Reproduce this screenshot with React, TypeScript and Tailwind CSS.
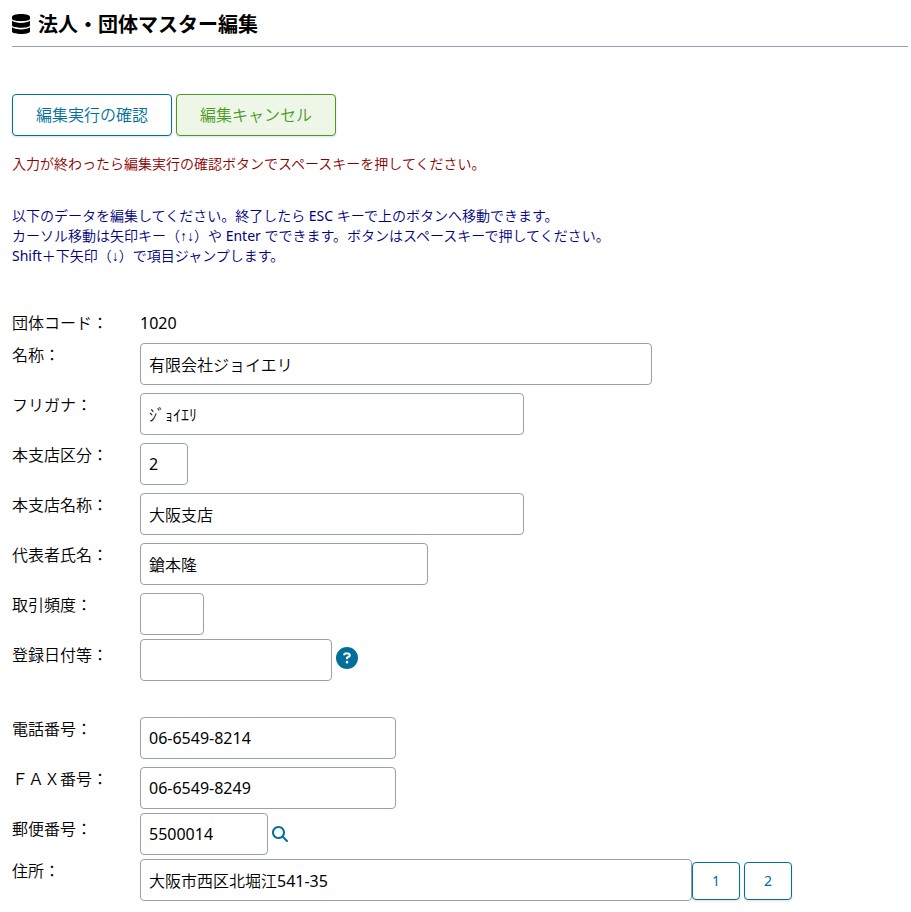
import { useState } from 'react';
import { FaCircleQuestion, FaMagnifyingGlass } from 'react-icons/fa6';

interface Field {
  id: string;
  label: string;
  value: string;
  width: string;
}

const basicFields: Field[] = [
  { id: 'name', label: '名称：', value: '有限会社ジョイエリ', width: 'w-[512px]' },
  { id: 'kana', label: 'フリガナ：', value: 'ｼﾞｮｲｴﾘ', width: 'w-96' },
  { id: 'branch_type', label: '本支店区分：', value: '2', width: 'w-12' },
  { id: 'branch_name', label: '本支店名称：', value: '大阪支店', width: 'w-96' },
  { id: 'representative', label: '代表者氏名：', value: '鎗本隆', width: 'w-72' },
  { id: 'frequency', label: '取引頻度：', value: '', width: 'w-16' },
];

const phoneFields: Field[] = [
  { id: 'tel', label: '電話番号：', value: '06-6549-8214', width: 'w-64' },
  { id: 'fax', label: 'ＦＡＸ番号：', value: '06-6549-8249', width: 'w-64' },
];

const inputClass =
  'h-[42px] min-w-0 px-2 bg-white border border-gray-400 rounded text-base text-black focus:outline-none focus:ring-2 focus:ring-sky-500';

function DatabaseIcon() {
  return (
    <svg className="w-[18px] h-5 mb-0.5 shrink-0" viewBox="0 0 18 20" fill="currentColor" aria-hidden="true">
      <path d="M0 3C0 1.2 4 0 9 0s9 1.2 9 3v1.8C18 6.3 14 7.2 9 7.2S0 6.3 0 4.8z" />
      <path d="M0 6.8C2 8.2 5.3 8.9 9 8.9s7-.7 9-2.1v4.4c0 1.6-4 2.5-9 2.5s-9-.9-9-2.5z" />
      <path d="M0 13.3c2 1.4 5.3 2.1 9 2.1s7-.7 9-2.1v3.9c0 1.8-4 2.8-9 2.8s-9-1-9-2.8z" />
    </svg>
  );
}

function TextRow({ field }: { field: Field }) {
  const [value, setValue] = useState(field.value);

  return (
    <div className="flex items-start py-1">
      <label htmlFor={field.id} className="w-32 shrink-0">
        {field.label}
      </label>
      <input
        id={field.id}
        type="text"
        value={value}
        onChange={(e) => setValue(e.target.value)}
        className={`${inputClass} ${field.width}`}
      />
    </div>
  );
}

// Narrow arrow glyphs for the key hints
function Arrow({ children }: { children: string }) {
  return <span className="font-['Liberation_Sans',sans-serif]">{children}</span>;
}

export default function App() {
  const [date, setDate] = useState('');
  const [zip, setZip] = useState('5500014');
  const [address, setAddress] = useState('大阪市西区北堀江541-35');

  return (
    <main className="pt-3 pb-2 pl-3 pr-[3px] bg-white text-base text-black font-['Noto_Sans','Noto_Sans_CJK_JP_DemiLight','Noto_Sans_CJK_JP',sans-serif]">
      <h1 className="flex items-center gap-2 pb-2 border-b border-slate-400 text-xl leading-[26px] font-bold font-['Noto_Sans','Noto_Sans_CJK_JP',sans-serif]">
        <DatabaseIcon />
        法人・団体マスター編集
      </h1>

      <div className="flex gap-1 mt-[47px]">
        <button
          type="button"
          className="w-40 h-[42px] bg-white border border-[#00709b] rounded shadow-sm text-[#00709b] hover:bg-sky-50"
        >
          編集実行の確認
        </button>
        <button
          type="button"
          className="w-40 h-[42px] bg-[#eef6e8] border border-[#4a9a1f] rounded shadow-sm text-[#4a9a1f] hover:bg-green-100"
        >
          編集キャンセル
        </button>
      </div>

      <p className="mt-[18px] text-sm text-[#8b0000]">
        入力が終わったら編集実行の確認ボタンでスペースキーを押してください。
      </p>
      <p className="mt-8 text-sm text-[#000080]">
        以下のデータを編集してください。終了したら ESC キーで上のボタンへ移動できます。
        <br />
        カーソル移動は矢印キー（<Arrow>↑↓</Arrow>）や Enter でできます。ボタンはスペースキーで押してください。
        <br />
        Shift＋下矢印（<Arrow>↓</Arrow>）で項目ジャンプします。
      </p>

      <form className="mt-[45px]" onSubmit={(e) => e.preventDefault()}>
        <div className="flex pb-1">
          <span className="w-32 shrink-0">団体コード：</span>
          <span>1020</span>
        </div>

        {basicFields.map((field) => (
          <TextRow key={field.id} field={field} />
        ))}

        <div className="flex items-start">
          <label htmlFor="date" className="w-32 shrink-0 pt-1">
            登録日付等：
          </label>
          <div className="flex items-start gap-1 min-w-0">
            <input
              id="date"
              type="text"
              value={date}
              onChange={(e) => setDate(e.target.value)}
              className={`${inputClass} w-48`}
            />
            <button type="button" aria-label="ヘルプ" className="mt-2 text-[22px] text-[#00709b]">
              <FaCircleQuestion />
            </button>
          </div>
        </div>

        <div className="mt-8">
          {phoneFields.map((field) => (
            <TextRow key={field.id} field={field} />
          ))}
        </div>

        <div className="flex items-start">
          <label htmlFor="zip" className="w-32 shrink-0 pt-1">
            郵便番号：
          </label>
          <div className="flex items-center gap-1 min-w-0">
            <input
              id="zip"
              type="text"
              value={zip}
              onChange={(e) => setZip(e.target.value)}
              className={`${inputClass} w-32`}
            />
            <button type="button" aria-label="郵便番号検索" className="text-base text-[#00709b]">
              <FaMagnifyingGlass />
            </button>
          </div>
        </div>

        <div className="flex items-start mt-1">
          <label htmlFor="address" className="w-32 shrink-0">
            住所：
          </label>
          <div className="flex items-start min-w-0">
            <input
              id="address"
              type="text"
              value={address}
              onChange={(e) => setAddress(e.target.value)}
              className={`${inputClass} w-[552px]`}
            />
            <div className="flex gap-1 mt-[3px] shrink-0">
              {['1', '2'].map((n) => (
                <button
                  key={n}
                  type="button"
                  className="w-12 h-[38px] bg-white border border-[#00709b] rounded shadow-sm text-sm text-[#00709b] hover:bg-sky-50"
                >
                  {n}
                </button>
              ))}
            </div>
          </div>
        </div>
      </form>
    </main>
  );
}
